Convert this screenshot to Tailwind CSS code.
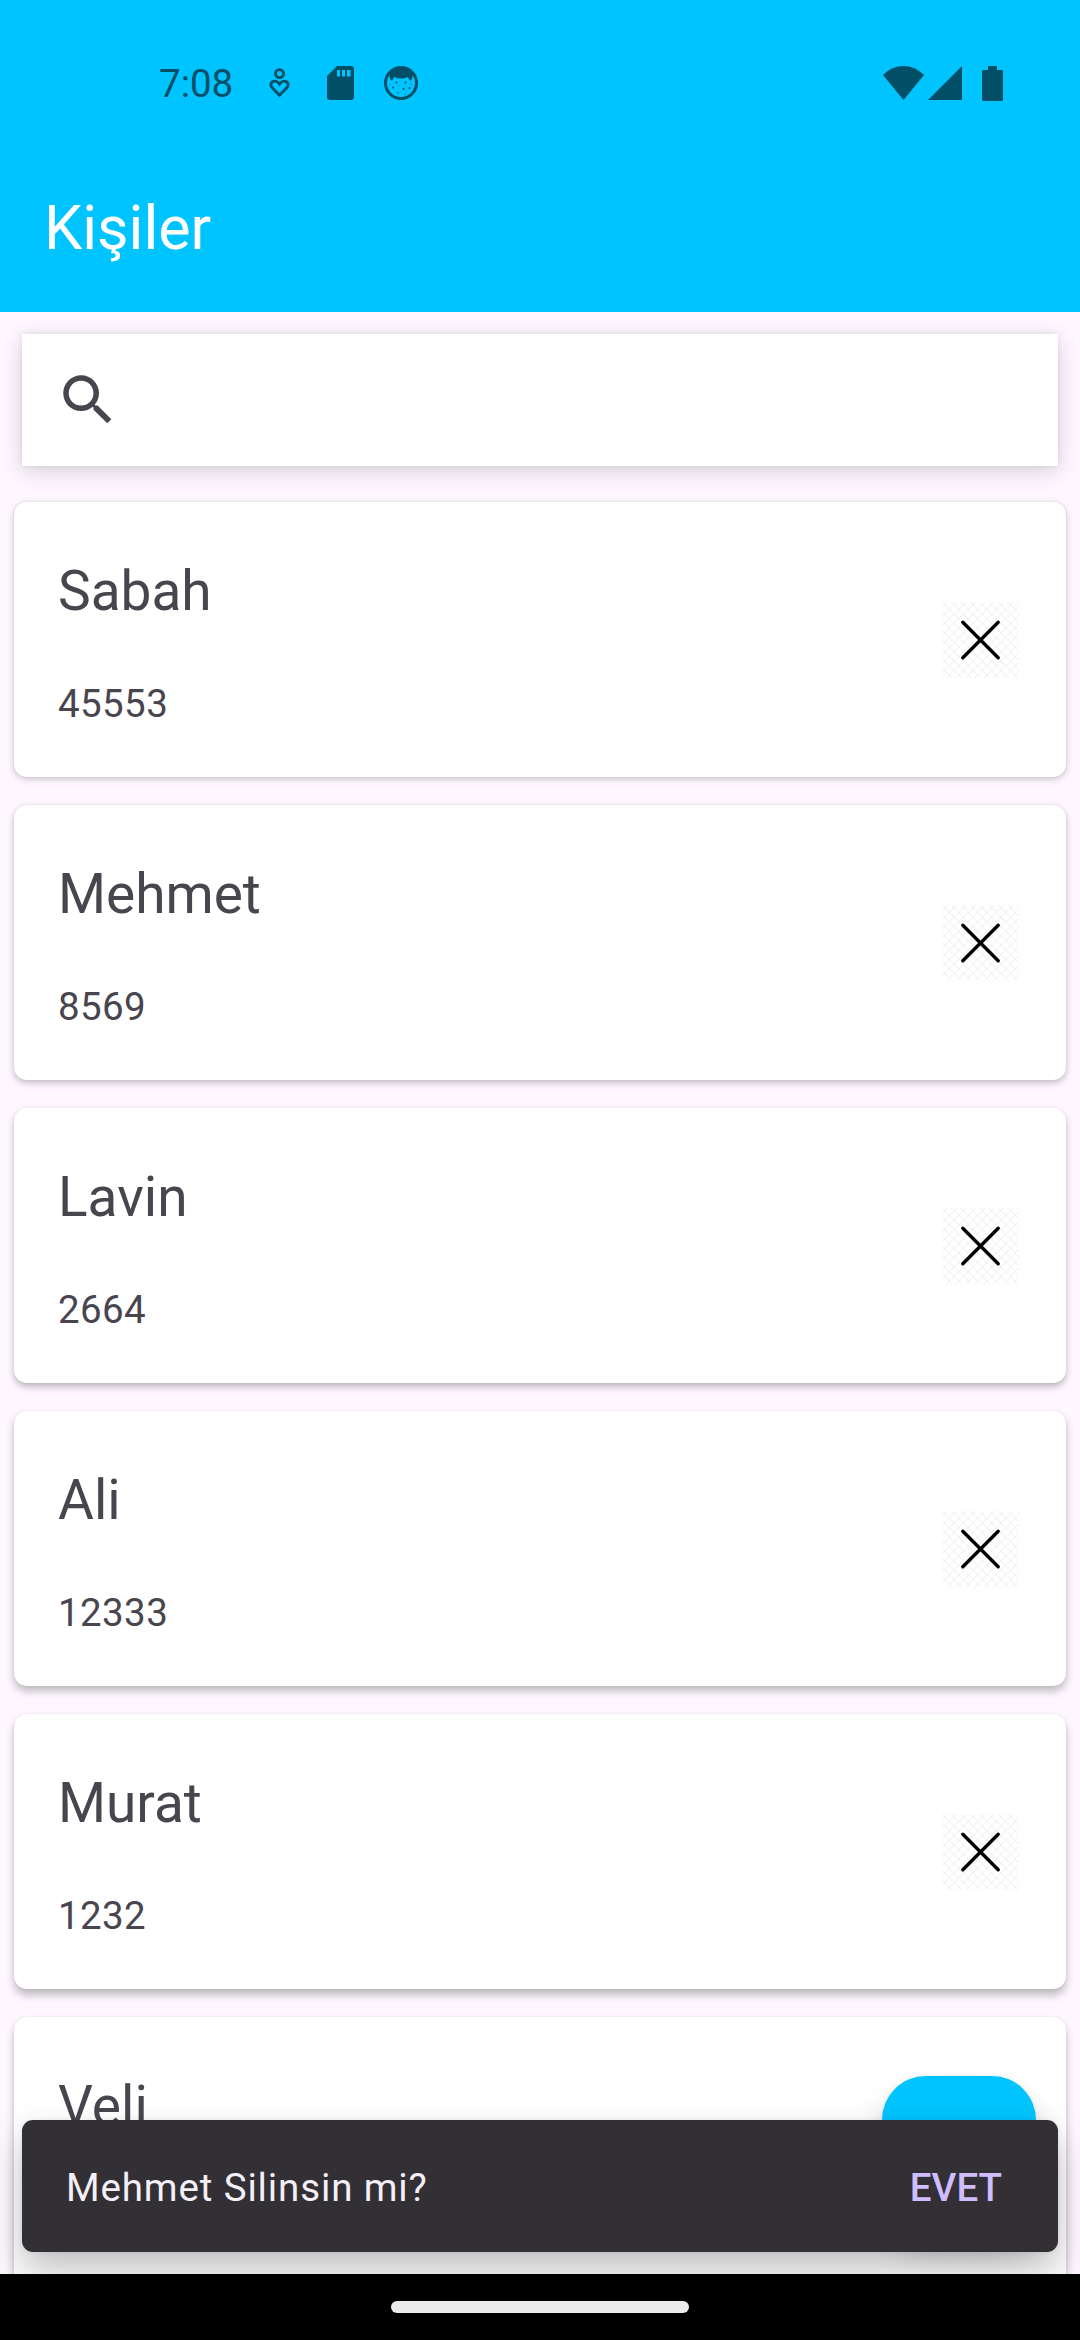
<!DOCTYPE html>
<html lang="tr">
<head>
<meta charset="utf-8">
<title>Kişiler</title>
<script src="https://cdn.jsdelivr.net/npm/@tailwindcss/browser@4"></script>
</head>
<body class="w-[1080px] h-[2340px] overflow-hidden bg-[#fef7ff] font-[Roboto,sans-serif] text-[#49454f]">
<svg width="0" height="0" class="absolute">
  <defs>
    <pattern id="lattice" width="9.4" height="9.4" patternUnits="userSpaceOnUse">
      <path d="M0 0L9.4 9.4M9.4 0L0 9.4" stroke="#ebebeb" stroke-width="0.8"/>
    </pattern>
    <symbol id="close" viewBox="0 0 80 80">
      <rect x="2" y="2" width="77" height="76" fill="url(#lattice)"/>
      <path d="M22.8 22.3L58.2 57.7M58.2 22.3L22.8 57.7" stroke="#000" stroke-width="3.4" stroke-linecap="round"/>
    </symbol>
  </defs>
</svg>
<div class="relative flex h-[2340px] flex-col overflow-hidden">
  <header class="relative z-10 flex h-[312px] shrink-0 flex-col bg-[#00c4ff]">
    <div class="flex h-[166px] items-center justify-between pl-[159px] pr-[77px] text-[#004f67]">
      <div class="flex items-center">
        <span class="w-[110px] pt-[3px] text-[38.5px] leading-none">7:08</span>
        <svg class="h-[30px] w-[22px]" viewBox="0 0 22 30" fill="none" stroke="currentColor" stroke-width="2.9"><circle cx="10.5" cy="5.6" r="4"/><path d="M10.500 27.200L3 19.600C-1 14.500 6.500 10 10.500 16C14.500 10 22 14.500 18 19.600Z"/></svg>
        <svg class="ml-[36px] h-[34px] w-[27px]" viewBox="0 0 27 34"><path fill="currentColor" fill-rule="evenodd" d="M10 0H24Q27 0 27 3V31Q27 34 24 34H3Q0 34 0 31V10ZM10 4V10.500H13V4ZM15 4V10.500H18V4ZM20 4V10.500H23.500V4Z"/></svg>
        <svg class="ml-[30px] h-[34px] w-[34px]" viewBox="0 0 34 34"><circle cx="17" cy="17" r="15.500" fill="none" stroke="currentColor" stroke-width="3"/><path fill="currentColor" d="M5 8Q17-4 29 8L28 13L26 15L24 11Q17 14 10 11L8 15L6 13Z"/><g fill="currentColor"><circle cx="12.500" cy="16.500" r="1"/><circle cx="21.500" cy="16.500" r="1"/><circle cx="9" cy="21.500" r="1"/><circle cx="19.500" cy="23" r="1"/><circle cx="25.500" cy="22" r="1"/><circle cx="14" cy="27" r=".8"/><circle cx="6" cy="18" r=".6"/><circle cx="15" cy="20" r=".5"/><circle cx="27" cy="18" r=".6"/><circle cx="21" cy="28" r=".6"/></g></svg>
      </div>
      <div class="flex items-center">
        <svg class="h-[34px] w-[41px]" viewBox="0 0 41 34"><path fill="currentColor" d="M0 9Q9 0 20.500 0T41 9L20.500 34Z"/></svg>
        <svg class="ml-[4px] h-[34px] w-[34px]" viewBox="0 0 34 34"><path fill="currentColor" d="M34 0V34H0Z"/></svg>
        <svg class="ml-[20px] h-[35px] w-[21px]" viewBox="0 0 21 35"><path fill="currentColor" d="M6 0H15V4H19.500Q21 4 21 5.500V33.500Q21 35 19.500 35H1.500Q0 35 0 33.500V5.500Q0 4 1.500 4H6Z"/></svg>
      </div>
    </div>
    <h1 class="pl-[44px] pt-[26px] text-[61px] leading-[72px] text-white">Kişiler</h1>
  </header>

  <div class="mx-[22px] mt-[22px] flex h-[132px] shrink-0 items-center bg-white pl-[33px] shadow-[0_5px_22px_rgba(0,0,0,0.16),0_0_5px_rgba(0,0,0,0.08)]">
    <svg class="h-[66px] w-[66px]" viewBox="0 0 24 24"><path fill="#49454f" d="M15.500 14h-.79l-.28-.27C15.410 12.590 16 11.110 16 9.500 16 5.910 13.090 3 9.500 3S3 5.910 3 9.500 5.910 16 9.500 16c1.610 0 3.090-.59 4.230-1.570l.27.28v.79l5 4.990L20.490 19l-4.990-5zm-6 0C7.010 14 5 11.990 5 9.500S7.010 5 9.500 5 14 7.010 14 9.500 11.990 14 9.500 14z"/></svg>
  </div>

  <main class="mx-[14px] mt-[36px] flex flex-col gap-[28px]">
    <article class="flex h-[275px] shrink-0 items-center justify-between rounded-[13px] bg-white pl-[44px] pr-[46px] shadow-[0_2px_7px_rgba(0,0,0,0.22),0_0_2px_rgba(0,0,0,0.08)]">
      <div class="self-start pt-[57px]"><h2 class="text-[55px] leading-[64px]">Sabah</h2><p class="mt-[55px] text-[38.5px] leading-[52px] tracking-[0.4px]">45553</p></div>
      <svg class="size-[80px]"><use href="#close"/></svg>
    </article>
    <article class="flex h-[275px] shrink-0 items-center justify-between rounded-[13px] bg-white pl-[44px] pr-[46px] shadow-[0_3px_7px_rgba(0,0,0,0.24),0_0_2px_rgba(0,0,0,0.08)]">
      <div class="self-start pt-[57px]"><h2 class="text-[55px] leading-[64px]">Mehmet</h2><p class="mt-[55px] text-[38.5px] leading-[52px] tracking-[0.4px]">8569</p></div>
      <svg class="size-[80px]"><use href="#close"/></svg>
    </article>
    <article class="flex h-[275px] shrink-0 items-center justify-between rounded-[13px] bg-white pl-[44px] pr-[46px] shadow-[0_4px_7px_rgba(0,0,0,0.25),0_0_2px_rgba(0,0,0,0.08)]">
      <div class="self-start pt-[57px]"><h2 class="text-[55px] leading-[64px]">Lavin</h2><p class="mt-[55px] text-[38.5px] leading-[52px] tracking-[0.4px]">2664</p></div>
      <svg class="size-[80px]"><use href="#close"/></svg>
    </article>
    <article class="flex h-[275px] shrink-0 items-center justify-between rounded-[13px] bg-white pl-[44px] pr-[46px] shadow-[0_5px_8px_rgba(0,0,0,0.26),0_0_2px_rgba(0,0,0,0.08)]">
      <div class="self-start pt-[57px]"><h2 class="text-[55px] leading-[64px]">Ali</h2><p class="mt-[55px] text-[38.5px] leading-[52px] tracking-[0.4px]">12333</p></div>
      <svg class="size-[80px]"><use href="#close"/></svg>
    </article>
    <article class="flex h-[275px] shrink-0 items-center justify-between rounded-[13px] bg-white pl-[44px] pr-[46px] shadow-[0_6px_9px_rgba(0,0,0,0.26),0_0_2px_rgba(0,0,0,0.08)]">
      <div class="self-start pt-[57px]"><h2 class="text-[55px] leading-[64px]">Murat</h2><p class="mt-[55px] text-[38.5px] leading-[52px] tracking-[0.4px]">1232</p></div>
      <svg class="size-[80px]"><use href="#close"/></svg>
    </article>
    <article class="flex h-[275px] shrink-0 items-start rounded-[13px] bg-white pl-[44px] pt-[57px] shadow-[0_6px_9px_rgba(0,0,0,0.26),0_0_2px_rgba(0,0,0,0.08)]">
      <h2 class="text-[55px] leading-[64px]">Veli</h2>
    </article>
  </main>

  <!-- Floating action button, partly under the snackbar -->
  <div class="absolute left-[882px] top-[2076px] h-[154px] w-[154px] rounded-[44px] bg-[#00c4ff] shadow-[0_20px_30px_rgba(0,0,0,0.2),0_0_5px_rgba(0,0,0,0.06)]"></div>

  <!-- Snackbar -->
  <div class="absolute left-[22px] top-[2120px] flex h-[132px] w-[1036px] items-center justify-between rounded-[11px] bg-[#322f35] pl-[44px] pr-[56px] pt-[3px] text-[38.5px] shadow-[0_18px_36px_rgba(0,0,0,0.25),0_0_5px_rgba(0,0,0,0.06)]">
    <span class="tracking-[0.87px] text-[#f5eff7]">Mehmet Silinsin mi?</span>
    <span class="font-medium text-[#d0bcff]">EVET</span>
  </div>

  <nav class="absolute bottom-0 left-0 flex h-[66px] w-full items-start justify-center bg-black pt-[27px]">
    <div class="h-[12px] w-[298px] rounded-full bg-[#ebebeb]"></div>
  </nav>
</div>
</body>
</html>
